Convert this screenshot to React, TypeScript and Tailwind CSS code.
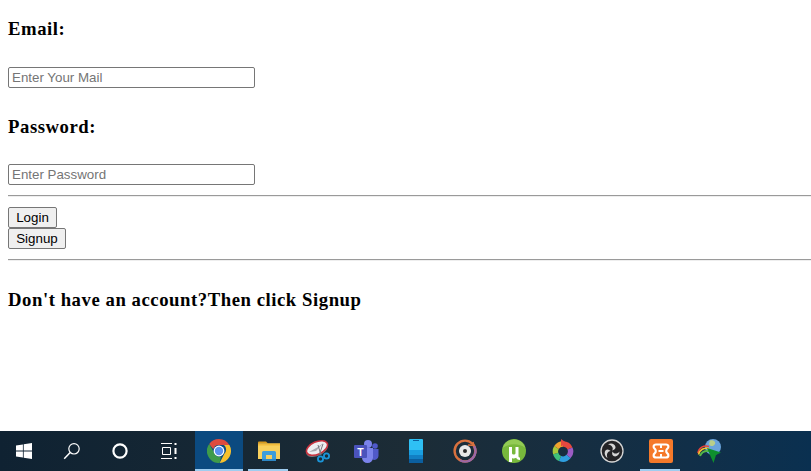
import React from 'react';

function TaskButton({ active, running, children }: { active?: boolean; running?: boolean; children: React.ReactNode }) {
  return (
    <div className={`relative flex h-10 shrink-0 items-center justify-center ${active ? 'mr-px w-12 bg-[#0b4a80]' : 'w-[49px]'}`}>
      {children}
      {(active || running) && (
        <div className={`absolute bottom-0 h-0.5 bg-[#9fcdf0] ${active ? 'inset-x-0' : 'left-1 w-10'}`} />
      )}
    </div>
  );
}

const WindowsLogo = () => (
  <svg width="16" height="16" viewBox="0 0 16 16" fill="#fff">
    <path d="M0 2.4 6.9 1.4V7.6H0ZM7.7 1.3 16 0V7.6H7.7ZM0 8.4H6.9V14.6L0 13.6ZM7.7 8.4H16V16L7.7 14.7Z" />
  </svg>
);

const SearchIcon = () => (
  <svg width="18" height="18" viewBox="0 0 18 18" fill="none" stroke="#fff" strokeWidth="1.2">
    <circle cx="11" cy="6.8" r="5.2" />
    <path d="M7.2 10.6 1.2 16.8" strokeWidth="1.5" />
  </svg>
);

const CortanaIcon = () => (
  <svg width="16" height="16" viewBox="0 0 16 16" fill="none" stroke="#fff" strokeWidth="2.2">
    <circle cx="8" cy="8" r="6.6" />
  </svg>
);

const TaskViewIcon = () => (
  <svg width="17" height="16" viewBox="0 0 17 16" fill="none" stroke="#fff" strokeWidth="1">
    <path d="M0 .5H11M0 15.5H11M1.5 4.5H9.5V11.5H1.5Z" />
    <path d="M14.5 0V2M14.5 5V11M14.5 14V16" strokeWidth="2" />
  </svg>
);

const ChromeIcon = () => (
  <svg width="24" height="24" viewBox="0 0 24 24">
    <path d="M12 0A12 12 0 0 1 22.4 6H12A6 6 0 0 0 6.3 10.2L2.2 5A12 12 0 0 1 12 0Z" fill="#dd4b3e" />
    <path d="M22.4 6A12 12 0 0 1 12.6 24L17.2 15A6 6 0 0 0 17 6Z" fill="#f6c02d" />
    <path d="M2.2 5 7 13.5A6 6 0 0 0 14 17.7L12.6 24A12 12 0 0 1 2.2 5Z" fill="#3f9b4a" />
    <circle cx="12" cy="12" r="5.4" fill="#fff" />
    <circle cx="12" cy="12" r="4.2" fill="#5b93ef" />
  </svg>
);

const ExplorerIcon = () => (
  <svg width="22" height="20" viewBox="0 0 22 20">
    <path d="M0 1.5A1 1 0 0 1 1 .5H8L10 2.5H0Z" fill="#d99a1d" />
    <rect y="2.5" width="22" height="15.5" fill="#f8d05d" />
    <rect y="2.5" width="22" height="2" fill="#f2bb3b" />
    <path d="M4 18V11.5A1.5 1.5 0 0 1 5.5 10H16.5A1.5 1.5 0 0 1 18 11.5V18H14V14H8V18Z" fill="#3d9ddb" />
    <rect x="4" y="18" width="14" height="2" fill="#2d86c4" />
  </svg>
);

const SnipIcon = () => (
  <svg width="25" height="24" viewBox="0 0 25 24">
    <ellipse cx="12" cy="10.5" rx="11.5" ry="6.4" transform="rotate(-24 12 10.5)" fill="#77777d" />
    <ellipse cx="12" cy="9" rx="11.2" ry="6.2" transform="rotate(-24 12 9)" fill="#eeeef0" stroke="#c8323e" strokeWidth="1.6" />
    <path d="M4 13 13 8 19 3.5 11 12Z" fill="#a9a9b0" />
    <path d="M13 6 16 16M18 5 14.5 15" stroke="#77777f" strokeWidth="1" />
    <circle cx="15.5" cy="20" r="2.6" fill="none" stroke="#1b95d8" strokeWidth="1.8" />
    <circle cx="21.5" cy="17" r="2.6" fill="none" stroke="#1b95d8" strokeWidth="1.8" />
  </svg>
);

const TeamsIcon = () => (
  <svg width="25" height="24" viewBox="0 0 25 24">
    <circle cx="14" cy="5" r="4" fill="#7b83eb" />
    <circle cx="21" cy="7" r="2.8" fill="#5059c9" />
    <path d="M17 10H24.5V17A4 4 0 0 1 18 20Z" fill="#5059c9" />
    <path d="M8 9H19V18.5A5.5 5.5 0 0 1 8 18.5Z" fill="#7b83eb" />
    <rect y="6" width="13" height="13" rx="1" fill="#4b53bc" />
    <text x="6.5" y="16.5" textAnchor="middle" fontFamily="Liberation Sans, sans-serif" fontSize="10.5" fontWeight="700" fill="#fff">T</text>
  </svg>
);

const PhoneIcon = () => (
  <svg width="14" height="24" viewBox="0 0 14 24">
    <rect width="14" height="24" rx="1" fill="#2fc0f4" />
    <rect y="11" width="14" height="5" fill="#1a9fe0" />
    <rect y="16" width="14" height="4" fill="#127fc4" />
    <rect y="20" width="14" height="4" fill="#0b5f9f" />
    <rect x="4" y="1" width="6" height="1" fill="#0b5f9f" />
  </svg>
);

const GrooveIcon = () => (
  <svg width="24" height="24" viewBox="0 0 24 24" fill="none">
    <circle cx="12" cy="12" r="10.4" stroke="#d9713e" strokeWidth="2.4" />
    <path d="M21 6.8A10.4 10.4 0 0 1 7 21.2" stroke="#9a67a8" strokeWidth="2.4" />
    <path d="M15 6 21 6.5 20 3" stroke="#d9713e" strokeWidth="1.4" />
    <circle cx="12" cy="12" r="6" fill="#e8e8e8" />
    <circle cx="12" cy="12" r="2" fill="#2b2b2b" />
  </svg>
);

const TorrentIcon = () => (
  <svg width="24" height="24" viewBox="0 0 24 24">
    <circle cx="12" cy="12" r="12" fill="#78b83c" />
    <path d="M0.5 9A12 12 0 0 1 23.5 9 20 20 0 0 0 .5 9Z" fill="#93cb55" />
    <path d="M7 8H10V14C10 16 13.5 16 13.5 14V8H16.5V17C16.5 18 17 18.5 18 18.5V21C15.5 21 14.5 20 14.2 18.8 12.5 19.8 11 19.8 10 19V23H7Z" fill="#fff" />
  </svg>
);

const ColorRingIcon = () => (
  <svg width="22" height="24" viewBox="0 0 22 24" fill="none" strokeWidth="5.4">
    <path d="M11 5A7.5 7.5 0 0 1 18 9.5" stroke="#e5483f" />
    <path d="M18 9.5A7.5 7.5 0 0 1 16.5 17.5" stroke="#9b5cc4" />
    <path d="M16.5 17.5A7.5 7.5 0 0 1 8 19.5" stroke="#2f9fe0" />
    <path d="M8 19.5A7.5 7.5 0 0 1 3.7 14.5" stroke="#3fc07a" />
    <path d="M3.7 14.5A7.5 7.5 0 0 1 4.5 8.5" stroke="#a5c93a" />
    <path d="M4.5 8.5A7.5 7.5 0 0 1 11 5" stroke="#f0a32f" />
    <path d="M9 0 14.5 4 9 7.5Z" fill="#e5483f" stroke="none" />
  </svg>
);

const ObsIcon = () => (
  <svg width="24" height="24" viewBox="0 0 24 24" fill="none">
    <circle cx="12" cy="12" r="11" fill="#232326" stroke="#d6d6d6" strokeWidth="1.3" />
    <path d="M8 5.5C11 3.5 15 5 15.5 8 15.8 10 14 11 12 11.5 14 9.5 12 6 8 5.5Z" fill="#d6d6d6" />
    <path d="M19.5 12.5C19.5 16 16 18.5 13.5 17 11.8 16 12 14 12.5 12.5 13.5 15 17 15.5 19.5 12.5Z" fill="#d6d6d6" />
    <path d="M7.5 19C4.5 17 3.8 13 6 11 7.5 9.8 9.3 10.8 10.7 12 8 12 6 15 7.5 19Z" fill="#d6d6d6" />
  </svg>
);

const XamppIcon = () => (
  <svg width="24" height="24" viewBox="0 0 24 24" fill="none">
    <rect width="24" height="24" rx="2" fill="#f5792a" />
    <path d="M7 5.5H17C19.8 5.5 20.2 8.6 18 10 17 10.8 17 13.2 18 14 20.2 15.4 19.8 18.5 17 18.5H7C4.2 18.5 3.8 15.4 6 14 7 13.2 7 10.8 6 10 3.8 8.6 4.2 5.5 7 5.5Z" stroke="#fff" strokeWidth="2.2" />
    <path d="M12 6V9M12 15V18M9.5 12H14.5" stroke="#fff" strokeWidth="2" />
  </svg>
);

const IdmIcon = () => (
  <svg width="25" height="24" viewBox="0 0 25 24" fill="none">
    <circle cx="16" cy="8" r="8" fill="#6aa4dc" />
    <path d="M13 1.5C16 0.5 19 2.5 18 5S13 8 12 5Z" fill="#b9cf8a" />
    <path d="M1 14C1.5 8.5 7 6 12 7.5" stroke="#e8433a" strokeWidth="1.6" />
    <path d="M1.5 15.5C2.5 10.5 7 8.5 12 9.5" stroke="#f2c230" strokeWidth="1.6" />
    <path d="M3 17C4.5 13 8 11.5 12 12" stroke="#55b947" strokeWidth="2" />
    <path d="M10 9 24 13.5 19 16 16.5 24Z" fill="#0e8f2e" />
  </svg>
);

const headingClass = "text-[18.72px] leading-[22px] font-bold tracking-[0.55px]";
const inputClass = "block h-[21px] w-[247px] rounded-[2px] border border-[#767676] px-[3px] font-['Liberation_Sans',sans-serif] text-[13.33px] placeholder:text-[#757575]";
const buttonClass = "block h-[21px] rounded-[2px] border border-[#767676] bg-[#efefef] font-['Liberation_Sans',sans-serif] text-[13.33px]";
const ruleClass = "mt-[10px] border-t border-b border-t-[#9a9a9a] border-b-[#eeeeee]";

export default function App() {
  return (
    <div className="flex h-[471px] w-[811px] flex-col overflow-hidden bg-white font-['Liberation_Serif',serif] text-black">
      <main className="flex-1 pl-2">
        <h3 className={`mt-[18px] ${headingClass}`}>Email:</h3>
        <input type="text" placeholder="Enter Your Mail" className={`mt-[27px] ${inputClass}`} />
        <h3 className={`mt-[28px] ${headingClass}`}>Password:</h3>
        <input type="password" placeholder="Enter Password" className={`mt-[26px] ${inputClass}`} />
        <hr className={ruleClass} />
        <button className={`mt-[10px] w-[49px] ${buttonClass}`}>Login</button>
        <button className={`w-[58px] ${buttonClass}`}>Signup</button>
        <hr className={ruleClass} />
        <h3 className={`mt-[28px] ${headingClass}`}>Don't have an account?Then click Signup</h3>
      </main>
      <footer className="flex h-10 shrink-0 items-center bg-gradient-to-r from-[#0f2232] via-[#1c2c36] to-[#0a3050]">
        <div className="flex h-10 w-12 shrink-0 items-center justify-center"><WindowsLogo /></div>
        <div className="flex h-10 w-12 shrink-0 items-center justify-center"><SearchIcon /></div>
        <div className="flex h-10 w-12 shrink-0 items-center justify-center"><CortanaIcon /></div>
        <div className="flex h-10 w-[51px] shrink-0 items-center justify-center"><TaskViewIcon /></div>
        <TaskButton active><ChromeIcon /></TaskButton>
        <TaskButton running><ExplorerIcon /></TaskButton>
        <TaskButton><SnipIcon /></TaskButton>
        <TaskButton><TeamsIcon /></TaskButton>
        <TaskButton><PhoneIcon /></TaskButton>
        <TaskButton><GrooveIcon /></TaskButton>
        <TaskButton><TorrentIcon /></TaskButton>
        <TaskButton><ColorRingIcon /></TaskButton>
        <TaskButton><ObsIcon /></TaskButton>
        <TaskButton running><XamppIcon /></TaskButton>
        <TaskButton><IdmIcon /></TaskButton>
      </footer>
    </div>
  );
}
